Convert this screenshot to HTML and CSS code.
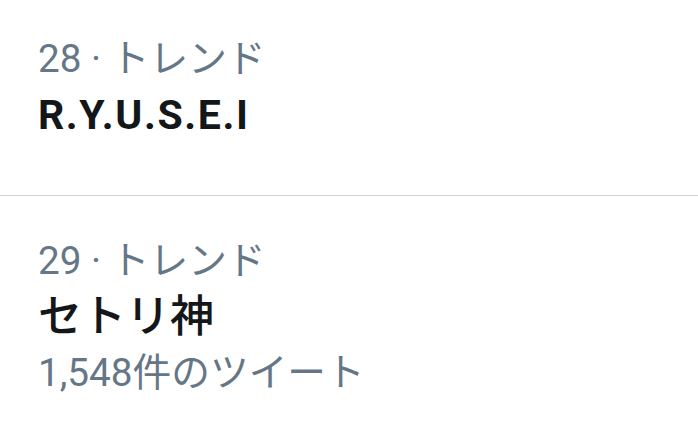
FILE: index.html
```html
<!DOCTYPE html>
<html lang="ja">
<head>
<meta charset="utf-8">
<link rel="stylesheet" href="styles.css">
</head>
<body>
<div class="list">
  <div class="trend first">
    <div class="meta">28 · トレンド</div>
    <div class="title latin">R.Y.U.S.E.I</div>
  </div>
  <div class="trend">
    <div class="meta">29 · トレンド</div>
    <div class="title jp">セトリ神</div>
    <div class="meta">1,548件のツイート</div>
  </div>
</div>
</body>
</html>
```

FILE: styles.css
```css
html, body {
  margin: 0;
  padding: 0;
  background: #ffffff;
}
body {
  width: 698px;
  height: 431px;
  overflow: hidden;
  font-family: Roboto, "Noto Sans CJK JP", sans-serif;
}
.list {
  display: flex;
  flex-direction: column;
}
.trend {
  padding: 37px 38px 40px 38px;
  line-height: 56px;
}
.trend.first {
  padding-top: 31px;
  padding-bottom: 52px;
  border-bottom: 1.5px solid #ced5d9;
}
.meta {
  font-size: 38.7px;
  color: #657786;
}
.title {
  color: #14171a;
}
.title.latin {
  font-size: 41px;
  font-weight: 700;
  letter-spacing: 1.6px;
}
.title.jp {
  font-size: 44px;
  font-weight: 500;
}
```
